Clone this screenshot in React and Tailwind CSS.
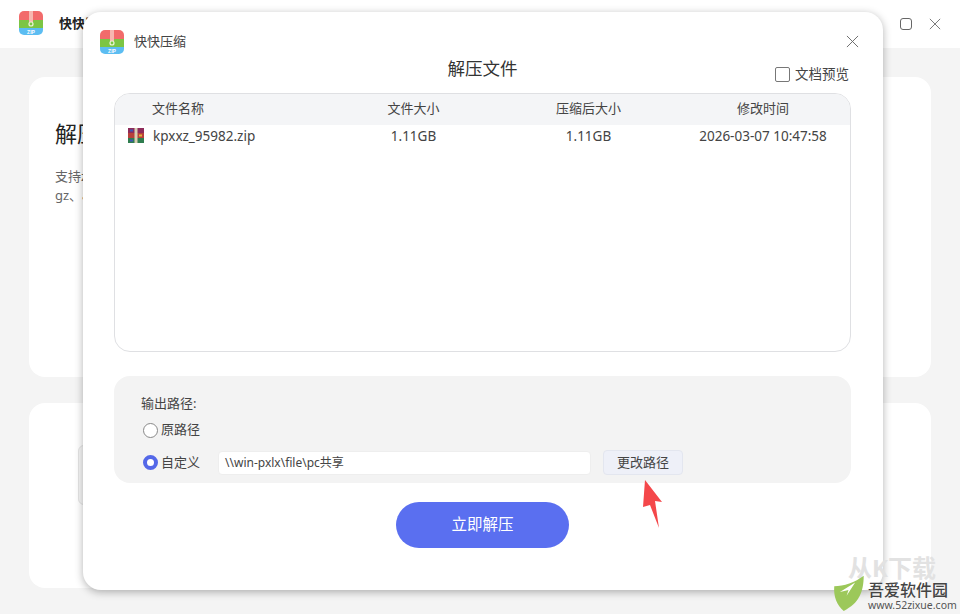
const FONT = "font-['Noto_Sans','Noto_Sans_CJK_SC',sans-serif]";

function Logo({ className }) {
  return (
    <svg viewBox="0 0 24 24" className={className}>
      <defs>
        <clipPath id="logoClip">
          <rect width="24" height="24" rx="5" />
        </clipPath>
      </defs>
      <g clipPath="url(#logoClip)">
        <rect width="24" height="9" fill="#f26b6b" />
        <rect y="9" width="24" height="8" fill="#7cc544" />
        <rect y="17" width="24" height="7" fill="#5cbdf2" />
        <rect x="10" width="4" height="11" fill="#f7b7b0" />
        <circle cx="12" cy="13" r="2" fill="none" stroke="#eef7d8" strokeWidth="1.2" />
        <text x="12" y="22.6" textAnchor="middle" fontSize="5" fontWeight="700" fill="#fff" fontFamily="Liberation Sans, sans-serif">ZIP</text>
      </g>
    </svg>
  );
}

function RarIcon() {
  return (
    <svg viewBox="0 0 16 16" className="w-4 h-4 shrink-0">
      <rect x="0" y="0" width="16" height="5" fill="#8e2b5a" />
      <rect x="0" y="5" width="16" height="5" fill="#b8403a" />
      <rect x="0" y="10" width="16" height="5" fill="#2f7d4f" />
      <rect x="6.5" y="0" width="3" height="15" fill="#d9cfb4" />
      <rect x="2" y="1.5" width="3" height="2" fill="#3f55b5" />
      <rect x="11" y="6.5" width="3" height="2" fill="#e3b23c" />
      <rect x="2" y="11.5" width="3" height="2" fill="#3f55b5" />
    </svg>
  );
}

function Close({ className }) {
  return (
    <svg viewBox="0 0 14 14" className={className} fill="none" stroke="#666" strokeWidth="1">
      <path d="M1 1 L13 13 M13 1 L1 13" />
    </svg>
  );
}

function Background() {
  return (
    <div className="flex flex-col h-[614px] bg-[#f4f4f4]">
      <div className="h-12 shrink-0 bg-white flex items-center pl-[19px] pr-[19px]">
        <Logo className="w-6 h-6 -mt-0.5" />
        <span className="ml-4 text-[13px] font-bold text-[#222]">快快压缩</span>
        <div className="ml-auto flex items-center gap-[17px]">
          <span className="w-3 h-3 border border-[#666] rounded-[3px]" />
          <Close className="w-3 h-3" />
        </div>
      </div>
      <div className="flex-1 flex flex-col gap-[26px] px-[29px] pt-[29px] pb-[26px]">
        <div className="h-[300px] bg-white rounded-2xl pl-[26px] pt-[40px]">
          <h2 className="text-[22px] leading-8 text-[#222]">解压文件</h2>
          <p className="mt-[18px] text-[13px] leading-[19px] text-[#666] w-[300px]">支持zip、rar、7z、tar、bz2、xz、iso、cab、<br />gz、arj等格式</p>
        </div>
        <div className="flex-1 bg-white rounded-2xl pt-[42px] pl-[49px]">
          <div className="w-20 h-[60px] bg-[#f6f6f6] border border-[#e4e4e4] rounded-md" />
        </div>
      </div>
    </div>
  );
}

function Modal() {
  return (
    <div className="absolute left-[83px] top-3 w-[800px] h-[578px] bg-white rounded-[18px] shadow-[0_2px_9px_rgba(0,0,0,0.3)] pl-[31px] pr-[32px] flex flex-col">
      <div className="flex items-center h-[24px] mt-[18px] -ml-[14px] relative">
        <Logo className="w-6 h-6" />
        <span className="ml-[10px] text-[13px] text-[#444]">快快压缩</span>
        <Close className="absolute right-[-8px] top-[5px] w-[13px] h-[13px]" />
      </div>
      <div className="relative h-[39px] flex justify-center">
        <h1 className="text-[17.5px] leading-6 mt-[2px] text-[#333]">解压文件</h1>
        <label className="absolute right-[2px] top-[13px] flex items-center gap-[5px] text-[13.5px] leading-[15px] text-[#444]">
          <span className="w-[15px] h-[15px] bg-white border border-[#777] rounded-[2px]" />
          文档预览
        </label>
      </div>
      <div className="h-[259px] shrink-0 border border-[#dfe0e3] rounded-2xl overflow-hidden">
        <div className="grid grid-cols-[211px_175px_175px_174px] h-[31px] pb-[2px] bg-[#f4f5f7] items-center text-[13px] text-[#444]">
          <span className="pl-[37px]">文件名称</span>
          <span className="text-center">文件大小</span>
          <span className="text-center">压缩后大小</span>
          <span className="text-center">修改时间</span>
        </div>
        <div className="grid grid-cols-[211px_175px_175px_174px] h-[22px] items-center text-[13.5px] text-[#444]">
          <span className="flex items-center gap-[9px] pl-[13px]"><RarIcon />kpxxz_95982.zip</span>
          <span className="text-center">1.11GB</span>
          <span className="text-center">1.11GB</span>
          <span className="text-center">2026-03-07 10:47:58</span>
        </div>
      </div>
      <div className="mt-6 h-[107px] shrink-0 bg-[#f3f3f3] rounded-2xl pl-[27px] flex flex-col">
        <div className="mt-[18px] text-[13px] leading-[18px] text-[#444]">输出路径:</div>
        <div className="mt-[9px] flex items-center h-[18px] text-[13px] text-[#444]">
          <span className="ml-[2px] w-[15px] h-[15px] rounded-full bg-white border border-[#888]" />
          <span className="ml-[3px]">原路径</span>
        </div>
        <div className="mt-[11px] flex items-center h-[25px] text-[13px] text-[#444]">
          <span className="ml-[2px] w-[15px] h-[15px] rounded-full bg-white border-[4px] border-[#5468e8]" />
          <span className="ml-[3px]">自定义</span>
          <div className="ml-[18px] w-[373px] h-[24px] bg-white rounded-[4px] border border-[#eeeeee] flex items-center pl-[6px] text-[12px] text-[#444]">\\win-pxlx\file\pc共享</div>
          <button className="ml-[12px] w-[80px] h-[25px] bg-[#eef0f8] border border-[#e3e6ef] rounded-[4px] text-[13px] text-[#444]">更改路径</button>
        </div>
      </div>
      <div className="mt-[19px] flex justify-center">
        <button className="w-[173px] h-[46px] rounded-full bg-[#5a6ff0] text-white text-[15.5px]">立即解压</button>
      </div>
    </div>
  );
}

function Watermark() {
  return (
    <div className="absolute left-[830px] top-[556px] w-[130px] h-[58px]">
      <span className="absolute left-[18px] top-[0px] text-[24px] leading-[24px] text-[#e2e2e2] font-bold whitespace-nowrap">从K下载</span>
      <svg viewBox="0 0 34 40" className="absolute left-[2px] top-[17px] w-[33px] h-[38px]">
        <path d="M2 14 C12 14 24 10 33 3 C33 20 28 32 12 40 C5 34 1 25 2 14 Z" fill="#9cc85a" />
        <path d="M8 20 L24 10 L15 24 L17 18 Z" fill="#fff" />
      </svg>
      <span className="absolute left-[38px] top-[26px] text-[16px] leading-[16px] font-medium text-[#444] whitespace-nowrap">吾爱软件园</span>
      <span className="absolute left-[38px] top-[43px] text-[10.5px] leading-[12px] text-[#555] whitespace-nowrap">www.52zixue.com</span>
    </div>
  );
}

export default function App() {
  return (
    <div className={`relative w-[960px] h-[614px] overflow-hidden ${FONT}`}>
      <Background />
      <Modal />
      <svg viewBox="0 0 960 614" className="absolute inset-0 w-[960px] h-[614px] pointer-events-none">
        <polygon points="645,480 662,502 655,501 659,528 650,505 643,507" fill="#f4474a" />
      </svg>
      <Watermark />
    </div>
  );
}
